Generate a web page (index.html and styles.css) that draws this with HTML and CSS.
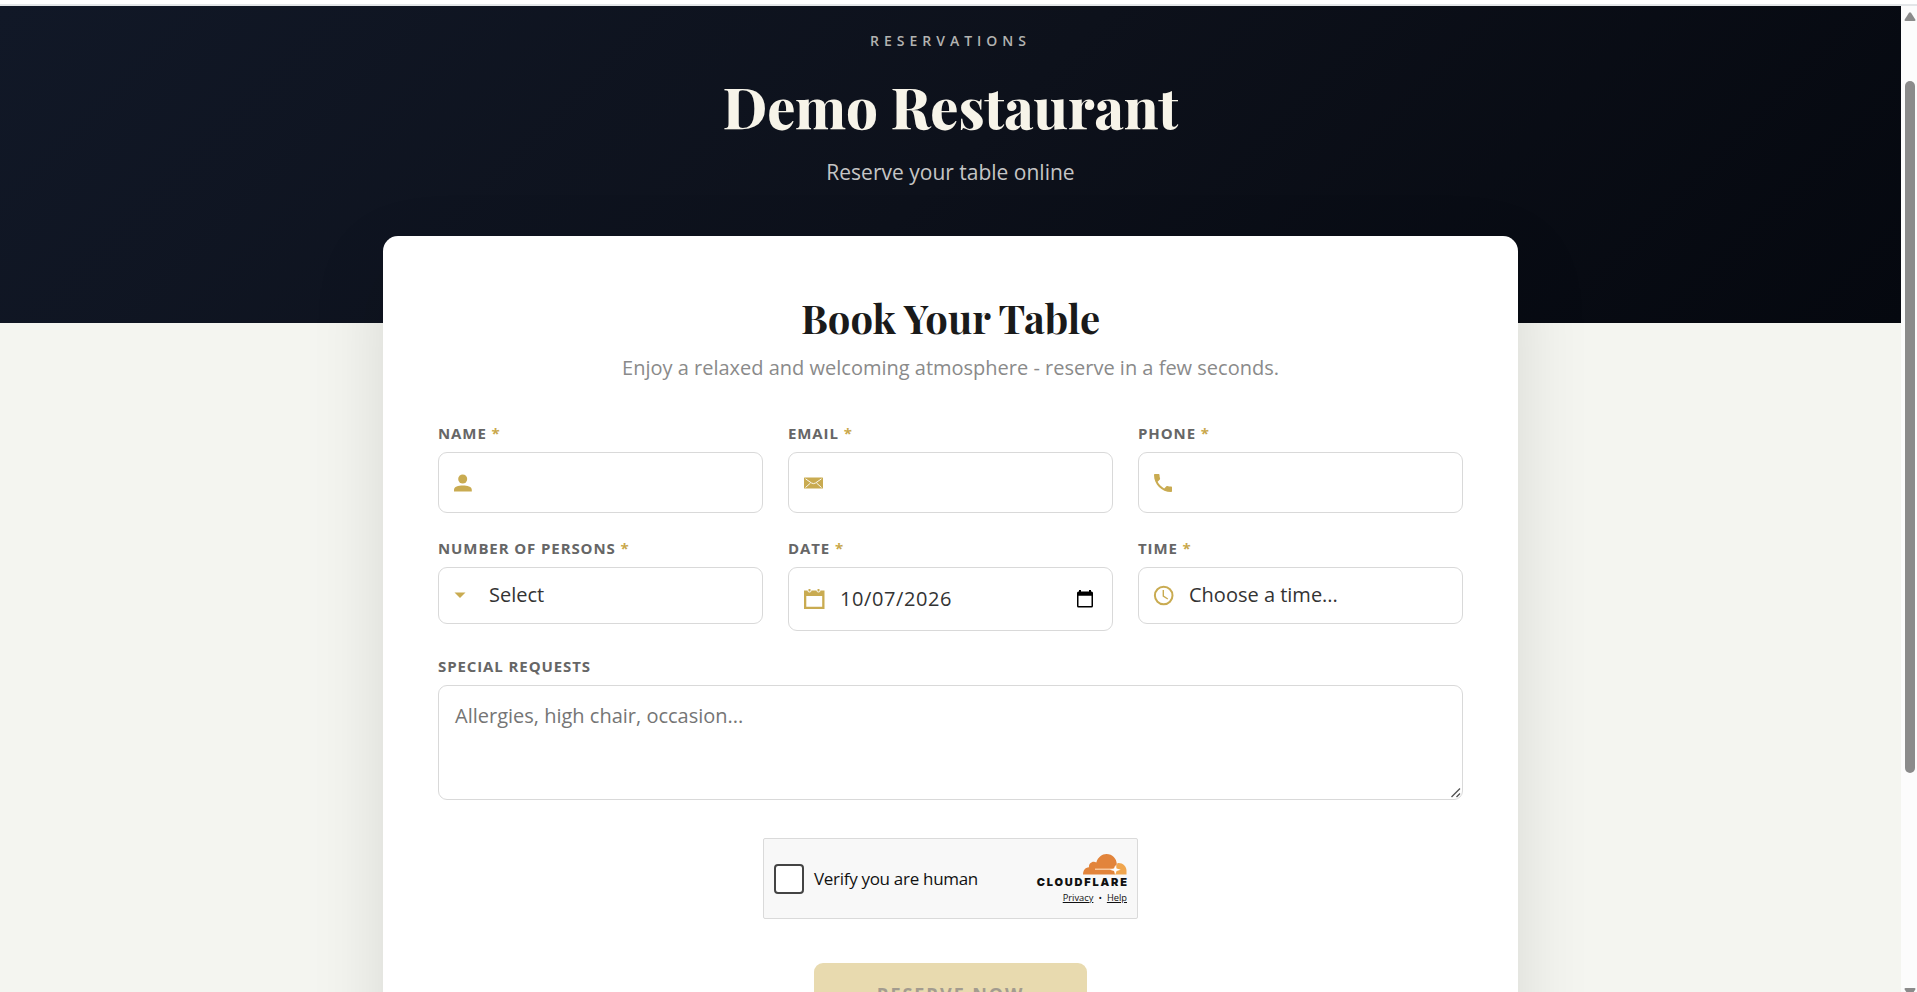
FILE: index.html
```html
<!DOCTYPE html>
<html lang="en">
<head>
    <meta charset="UTF-8">
    <meta name="viewport" content="width=device-width, initial-scale=1.0">
    <title>Demo Restaurant - Reservations</title>
    <link rel="stylesheet" href="styles.css">
</head>
<body>
    <div class="topbar"></div>

    <div class="viewport">
        <div class="page">
            <header class="hero">
                <div class="eyebrow">RESERVATIONS</div>
                <h1>Demo Restaurant</h1>
                <p class="tagline">Reserve your table online</p>
            </header>

            <main class="card">
                <h2>Book Your Table</h2>
                <p class="intro">Enjoy a relaxed and welcoming atmosphere - reserve in a few seconds.</p>

                <form>
                    <div class="fields">
                        <div class="field">
                            <label for="name">NAME <span>*</span></label>
                            <div class="control">
                                <svg class="icon" width="20" height="20" viewBox="0 0 20 20"><circle cx="9.7" cy="6" r="4.5"/><path d="M1 18.5v-1.6c0-3.2 4.2-4.4 8.8-4.4s9 1.2 9 4.4v1.6z"/></svg>
                                <input id="name" type="text">
                            </div>
                        </div>
                        <div class="field">
                            <label for="email">EMAIL <span>*</span></label>
                            <div class="control">
                                <svg class="icon" width="20" height="20" viewBox="0 0 20 20"><rect x="1" y="4.5" width="19" height="11" rx=".6"/><path class="cut" d="M2.500 5.800L8.500 10q2 1.300 4 0l6-4.200M2.500 14.500l5-4.500M18.500 14.500l-5-4.500"/></svg>
                                <input id="email" type="text">
                            </div>
                        </div>
                        <div class="field">
                            <label for="phone">PHONE <span>*</span></label>
                            <div class="control">
                                <svg class="icon" width="20" height="20" viewBox="0 0 20 20"><path d="M4.620 8.790c1.440 2.830 3.760 5.140 6.590 6.590l2.200-2.200c.27-.27.67-.36 1.020-.24 1.120.37 2.330.57 3.570.57.55 0 1 .45 1 1V18c0 .55-.45 1-1 1C8.610 19 1 11.390 1 2c0-.55.45-1 1-1h3.500c.55 0 1 .45 1 1 0 1.250.2 2.450.57 3.570.11.35.03.74-.25 1.020z"/></svg>
                                <input id="phone" type="text">
                            </div>
                        </div>

                        <div class="field">
                            <label>NUMBER OF PERSONS <span>*</span></label>
                            <div class="control select">
                                <svg class="icon" width="21" height="20" viewBox="0 0 21 20"><path d="M1.500 6.500h11L7 12z"/></svg>
                                <div class="value">Select</div>
                            </div>
                        </div>
                        <div class="field">
                            <label>DATE <span>*</span></label>
                            <div class="control date">
                                <svg class="icon" width="22" height="22" viewBox="0 0 22 22"><path fill-rule="evenodd" d="M1 2.500h3.500a2 2 0 0 0 4 0h5a2 2 0 0 0 4 0h4V21H1zM3.300 8v10.700h15.900V8z"/><path d="M5.500 1h2v2.500h-2zM14.500 1h2v2.500h-2z"/></svg>
                                <div class="value">10/07/2026</div>
                                <svg class="picker" width="18" height="20" viewBox="0 0 18 20"><path fill-rule="evenodd" d="M3 1h2v1.500h8V1h2v1.500h.5A1.500 1.500 0 0 1 17 4v13a1.500 1.500 0 0 1-1.500 1.500h-13A1.500 1.500 0 0 1 1 17V4a1.500 1.500 0 0 1 1.500-1.500H3zM2.500 6.700V17h13V6.700z"/></svg>
                            </div>
                        </div>
                        <div class="field">
                            <label>TIME <span>*</span></label>
                            <div class="control select">
                                <svg class="icon line" width="21" height="21" viewBox="0 0 21 21"><circle cx="10.700" cy="10.500" r="8.800"/><path class="hand" d="M10.300 5v6.200l4.500 2.800"/></svg>
                                <div class="value">Choose a time...</div>
                            </div>
                        </div>
                    </div>

                    <div class="field requests">
                        <label for="notes">SPECIAL REQUESTS</label>
                        <div class="notes">
                            <textarea id="notes" placeholder="Allergies, high chair, occasion..."></textarea>
                            <svg class="grip" width="10" height="10" viewBox="0 0 10 10"><path d="M.5 9L9 .5M5.500 9L9 5.500"/></svg>
                        </div>
                    </div>

                    <div class="captcha">
                        <span class="checkbox"></span>
                        <span class="verify">Verify you are human</span>
                        <div class="brand">
                            <svg class="cloud" width="44" height="21" viewBox="0 0 44 21">
                                <path fill="#e2843b" d="M0 20.500c0-4 2-7 6-7.200C5.500 9 10 6.500 13.300 8.500 15 3 19 0 23.500 0 29.500 0 33.500 4.500 33.800 10l-2.300 10.500z"/>
                                <path fill="#f0a64e" d="M31 20.500L34.500 9c5-.5 9 3 9 8v3.500z"/>
                                <path fill="#f8c79c" d="M12 14.500h19v1.500H12z"/>
                                <path fill="#fff" d="M32.300 11l1.300 3.500 4.200 1.200-4.200 1.200-1.300 3.500-1.300-3.500-4.200-1.200 4.200-1.200z"/>
                            </svg>
                            <div class="wordmark">CLOUDFLARE</div>
                            <div class="links"><a href="#">Privacy</a><span>•</span><a href="#">Help</a></div>
                        </div>
                    </div>

                    <button class="submit" type="button" disabled>RESERVE NOW</button>
                </form>
            </main>
        </div>

        <div class="scrollbar">
            <svg width="12" height="10" viewBox="0 0 12 10"><path d="M5 .8q1-1.200 2 0l4.300 6.700q.7 1.500-1 1.500H1.700Q0 9 .7 7.500z"/></svg>
            <div class="thumb"></div>
            <svg class="down" width="12" height="10" viewBox="0 0 12 10"><path d="M1.700 1h8.600q1.700 0 1 1.500L7 9.200q-1 1.200-2 0L.7 2.500Q0 1 1.700 1z"/></svg>
        </div>
    </div>
</body>
</html>
```
FILE: styles.css
```css
* {
    box-sizing: border-box;
}
body {
    margin: 0;
    height: 992px;
    overflow: hidden;
    font-family: "Open Sans", sans-serif;
    font-size: 20px;
    background-color: #f4f5f0;
}
.topbar {
    height: 6px;
    background-color: #fff;
    border-bottom: 2px solid #e3e6e8;
}
.viewport {
    display: flex;
    height: 986px;
    overflow: hidden;
}
.page {
    flex: 1;
    height: 986px;
    overflow: hidden;
}
.hero {
    height: 317px;
    padding-top: 25px;
    text-align: center;
    color: #c5c5c5;
    background: linear-gradient(135deg, #111827 0%, #0d111b 50%, #05080f 100%);
}
.eyebrow {
    font-size: 14px;
    line-height: 20px;
    font-weight: 600;
    letter-spacing: 5px;
    color: #b3b3b1;
}
h1, h2 {
    font-family: "Playfair Display", "Liberation Serif", serif;
    font-weight: 700;
    margin: 0;
}
h1 {
    margin-top: 15px;
    font-size: 56px;
    line-height: 80px;
    font-weight: 800;
    color: #f7f4e9;
}
.tagline {
    margin: 11px 0 0;
    font-size: 21px;
    line-height: 30px;
    font-weight: 500;
}
.card {
    position: relative;
    width: 1135px;
    height: 850px;
    margin: -87px auto 0;
    padding: 54px 55px 0;
    border-radius: 15px;
    background-color: #fff;
    box-shadow: 0 25px 75px rgba(0, 0, 0, 0.12);
    text-align: center;
}
h2 {
    font-size: 40px;
    line-height: 56px;
    color: #1a1a1a;
}
.intro {
    margin: 8px 0 0;
    line-height: 27px;
    color: #8a8a8a;
}
form {
    margin-top: 42px;
}
.fields {
    display: grid;
    grid-template-columns: repeat(3, 325px);
    column-gap: 25px;
    row-gap: 25px;
    align-items: start;
}
.field {
    text-align: left;
}
.field label {
    display: block;
    margin-bottom: 9px;
    font-size: 15px;
    line-height: 20px;
    font-weight: 700;
    letter-spacing: 0.9px;
    color: #666;
}
.field label span {
    color: #c9a84c;
}
.control {
    display: flex;
    align-items: center;
    height: 61px;
    padding: 0 18px 0 14px;
    border: 1px solid #d9d9d9;
    border-radius: 9px;
}
.control input {
    flex: 1;
    min-width: 0;
    border: 0;
    outline: 0;
    background: none;
    font: inherit;
}
.control.select {
    height: 57px;
}
.control.date {
    height: 64px;
}
.value {
    flex: 1;
    padding-bottom: 2px;
    color: #333;
}
.date .value {
    letter-spacing: 0.6px;
}
.icon {
    flex: none;
    margin-right: 15px;
    fill: #c9ab51;
}
.icon .cut {
    fill: none;
    stroke: #fff;
    stroke-width: 0.9;
}
.icon.line {
    fill: none;
    stroke: #c9ab51;
    stroke-width: 2;
}
.icon .hand {
    stroke-width: 1.4;
}
.requests {
    margin-top: 25px;
}
.notes {
    position: relative;
    height: 115px;
}
.notes textarea {
    display: block;
    width: 100%;
    height: 115px;
    padding: 16px;
    border: 1px solid #d9d9d9;
    border-radius: 9px;
    font: inherit;
    line-height: 27px;
    resize: none;
}
.notes textarea::placeholder {
    color: #757575;
}
.grip {
    position: absolute;
    right: 2px;
    bottom: 2px;
    fill: none;
    stroke: #555;
    stroke-width: 1.4;
}
.captcha {
    display: flex;
    align-items: center;
    width: 375px;
    height: 81px;
    margin: 38px auto 0;
    padding: 0 10px;
    border: 1px solid #dadada;
    border-radius: 2px;
    background-color: #f8f8f8;
    color: #111;
}
.checkbox {
    width: 30px;
    height: 30px;
    border: 2px solid #444;
    border-radius: 4px;
    background-color: #fff;
}
.verify {
    margin-left: 10px;
    font-size: 17px;
    letter-spacing: -0.3px;
}
.brand {
    margin-left: auto;
    padding-top: 1px;
    display: flex;
    flex-direction: column;
    align-items: flex-end;
}
.wordmark {
    margin-right: -1.8px;
    font-family: Inter, sans-serif;
    font-size: 11px;
    line-height: 14px;
    font-weight: 900;
    letter-spacing: 1.8px;
}
.links {
    display: flex;
    gap: 5px;
    margin-top: 1px;
    font-size: 9.3px;
    line-height: 15px;
}
.links a {
    color: #111;
}
.submit {
    display: block;
    width: 273px;
    height: 66px;
    margin: 44px auto 0;
    border: 0;
    border-radius: 9px;
    background-color: #e8daaf;
    color: #a39c8f;
    font-family: inherit;
    font-size: 18px;
    font-weight: 700;
    line-height: 24px;
    padding: 0 0 4px;
    letter-spacing: 1.9px;
}
.scrollbar {
    display: flex;
    flex-direction: column;
    align-items: center;
    width: 16px;
    height: 986px;
    padding: 6px 0 0 2px;
    background-color: #fcfcfc;
    fill: #8b8b8b;
}
.scrollbar > * {
    flex: none;
}
.thumb {
    width: 10px;
    height: 692px;
    margin-top: 59px;
    border-radius: 5px;
    background-color: #8b8b8b;
}
.down {
    margin-top: 214px;
}
```
